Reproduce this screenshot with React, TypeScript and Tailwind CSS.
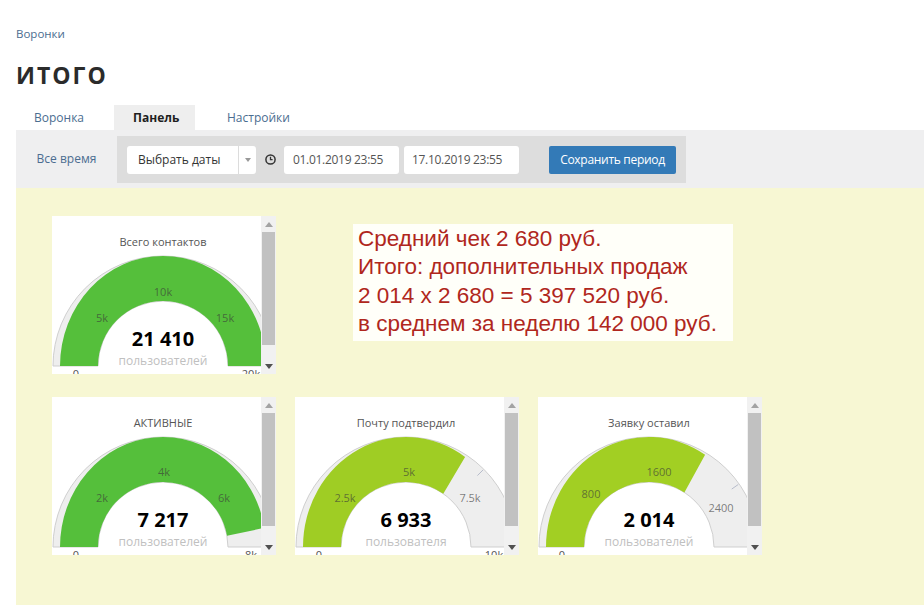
import React from 'react';

type Label = { t: string; x: number; y: number };

interface GaugeProps {
  title: string;
  value: string;
  unit: string;
  color: string;
  angle: number; // where the fill ends, degrees from the right end
  labels: Label[];
  maxLabel?: string;
  tick?: number;
}

const CX = 111;
const CY = 150;

function pt(rx: number, ry: number, deg: number) {
  const a = (deg * Math.PI) / 180;
  return [CX + rx * Math.cos(a), CY - ry * Math.sin(a)];
}

function Scrollbar() {
  return (
    <div className="flex w-[15px] shrink-0 flex-col bg-[#f1f1f1]">
      <div className="flex h-[16px] items-center justify-center">
        <svg width="8" height="5" viewBox="0 0 8 5">
          <polygon points="0,5 8,5 4,0" fill="#a3a3a3" />
        </svg>
      </div>
      <div className="mx-[1px] h-[113px] bg-[#c1c1c1]" />
      <div className="flex-1" />
      <div className="flex h-[16px] items-center justify-center">
        <svg width="8" height="5" viewBox="0 0 8 5">
          <polygon points="0,0 8,0 4,5" fill="#505050" />
        </svg>
      </div>
    </div>
  );
}

function Gauge({ title, value, unit, color, angle, labels, maxLabel, tick }: GaugeProps) {
  const [ox, oy] = pt(103, 110, angle);
  const [ix, iy] = pt(65, 65, angle);
  const pane = `M 1 ${CY} A 110 110 0 0 1 221 ${CY} L 176 ${CY} A 65 65 0 0 0 46 ${CY} Z`;
  const fill = `M 8 ${CY} A 103 110 0 0 1 ${ox} ${oy} L ${ix} ${iy} A 65 65 0 0 0 46 ${CY} Z`;
  const t1 = tick !== undefined ? pt(101, 101, tick) : null;
  const t2 = tick !== undefined ? pt(109, 109, tick) : null;

  return (
    <div className="flex h-[158px] w-[224px] shrink-0 bg-white">
      <div className="h-full w-[209px] overflow-hidden">
        <svg width="209" height="158" viewBox="0 0 209 158" className="font-['Open_Sans',sans-serif]">
          <text x={CX} y={25} textAnchor="middle" dominantBaseline="central" fontSize="11" fill="#555">
            {title}
          </text>
          <path d={pane} fill="#eeeeee" stroke="#cfcfcf" strokeWidth="1" />
          {t1 && t2 && (
            <line x1={t1[0]} y1={t1[1]} x2={t2[0]} y2={t2[1]} stroke="#b7bccb" strokeWidth="1" />
          )}
          <path d={fill} fill={color} />
          {labels.map((l) => (
            <text
              key={l.t}
              x={l.x}
              y={l.y}
              textAnchor="middle"
              dominantBaseline="central"
              fontSize="11"
              fill="#3a3a3a"
              fillOpacity="0.65"
            >
              {l.t}
            </text>
          ))}
          <text x={24} y={157} textAnchor="middle" dominantBaseline="central" fontSize="11" fill="#555">
            0
          </text>
          {maxLabel && (
            <text x={199} y={157} textAnchor="middle" dominantBaseline="central" fontSize="11" fill="#555">
              {maxLabel}
            </text>
          )}
          <text x={CX} y={122} textAnchor="middle" dominantBaseline="central" fontSize="20" fontWeight="700" fill="#000">
            {value}
          </text>
          <text x={CX} y={144} textAnchor="middle" dominantBaseline="central" fontSize="12" fill="#c0c0c0">
            {unit}
          </text>
        </svg>
      </div>
      <Scrollbar />
    </div>
  );
}

function ClockIcon() {
  return (
    <svg width="11" height="11" viewBox="0 0 11 11">
      <circle cx="5.5" cy="5.5" r="4.6" fill="none" stroke="#333" strokeWidth="1.5" />
      <path d="M5.5 2.8 V5.7 H7.6" fill="none" stroke="#333" strokeWidth="1.3" />
    </svg>
  );
}

export default function App() {
  return (
    <div className="h-[605px] w-[924px] overflow-hidden bg-white font-['Open_Sans',sans-serif]">
      <div className="pl-4 pt-[26px]">
        <div className="text-[11.5px] leading-4 text-[#4b6d90]">Воронки</div>
        <h1 className="mt-[19px] text-[23px] font-bold leading-7 tracking-[2px] text-[#2b2b2b]">ИТОГО</h1>

        {/* Tabs */}
        <div className="mt-[16px] flex h-[25px] text-[12px] leading-[25px]">
          <div className="w-[98px] pl-[18px] text-[#4b6d90]">Воронка</div>
          <div className="w-[81px] bg-[#eeeeee] pl-[19px] font-bold text-[#1e1e1e]">Панель</div>
          <div className="pl-[32px] text-[#4b6d90]">Настройки</div>
        </div>

        {/* Period bar */}
        <div className="flex h-[58px] items-start bg-[#efeff0]">
          <div className="flex h-full w-[101px] items-center justify-center text-[12px] text-[#4b6d90]">
            Все время
          </div>
          <div className="mt-[6px] flex h-[47px] w-[569px] items-center bg-[#dddddd] px-[10px] text-[12px]">
            <div className="flex h-[28px] w-[129px] rounded-[3px] bg-white">
              <div className="w-[111px] pl-[11px] leading-[28px] text-[#333]">Выбрать даты</div>
              <div className="flex flex-1 items-center justify-center border-l border-[#dcdcdc]">
                <svg width="6" height="4" viewBox="0 0 6 4">
                  <polygon points="0,0 6,0 3,4" fill="#999" />
                </svg>
              </div>
            </div>
            <div className="ml-[9px] flex items-center">
              <ClockIcon />
            </div>
            <div className="ml-[8px] h-[28px] w-[115px] rounded-[3px] bg-white pl-[9px] leading-[28px] tracking-[-0.3px] text-[#555]">
              01.01.2019 23:55
            </div>
            <div className="ml-[5px] h-[28px] w-[115px] rounded-[3px] bg-white pl-[8px] leading-[28px] tracking-[-0.3px] text-[#555]">
              17.10.2019 23:55
            </div>
            <button className="ml-[30px] h-[28px] w-[127px] rounded-[2px] bg-[#337ab7] text-[12px] tracking-[-0.3px] text-white">
              Сохранить период
            </button>
          </div>
        </div>

        {/* Dashboard */}
        <div className="h-[417px] bg-[#f7f7d3] pl-[36px] pt-[28px]">
          <div className="flex items-start">
            <Gauge
              title="Всего контактов"
              value="21 410"
              unit="пользователей"
              color="#55bf3b"
              angle={0}
              labels={[
                { t: '5k', x: 50, y: 101 },
                { t: '10k', x: 111, y: 75 },
                { t: '15k', x: 173, y: 101 },
              ]}
              maxLabel="20k"
            />
            <div className="ml-[77px] mt-[8px] h-[117px] w-[380px] bg-[#fffff9] pl-[5px] pt-[1px] font-['Liberation_Sans',Arial,sans-serif] text-[22.5px] leading-[28.3px] text-[#b0271d]">
              <div>Средний чек 2 680 руб.</div>
              <div>Итого: дополнительных продаж</div>
              <div>2 014 х 2 680 = 5 397 520 руб.</div>
              <div>в среднем за неделю 142 000 руб.</div>
            </div>
          </div>

          <div className="mt-[23px] flex gap-[19px]">
            <Gauge
              title="АКТИВНЫЕ"
              value="7 217"
              unit="пользователей"
              color="#55bf3b"
              angle={10}
              labels={[
                { t: '2k', x: 50, y: 100 },
                { t: '4k', x: 112, y: 74 },
                { t: '6k', x: 172, y: 100 },
              ]}
              maxLabel="8k"
            />
            <Gauge
              title="Почту подтвердил"
              value="6 933"
              unit="пользователя"
              color="#9fcd24"
              angle={55}
              tick={45}
              labels={[
                { t: '2.5k', x: 50, y: 100 },
                { t: '5k', x: 114, y: 74 },
                { t: '7.5k', x: 175, y: 100 },
              ]}
              maxLabel="10k"
            />
            <Gauge
              title="Заявку оставил"
              value="2 014"
              unit="пользователей"
              color="#a2cf23"
              angle={57}
              tick={35}
              labels={[
                { t: '800', x: 53, y: 96 },
                { t: '1600', x: 121, y: 74 },
                { t: '2400', x: 183, y: 110 },
              ]}
            />
          </div>
        </div>
      </div>
    </div>
  );
}
